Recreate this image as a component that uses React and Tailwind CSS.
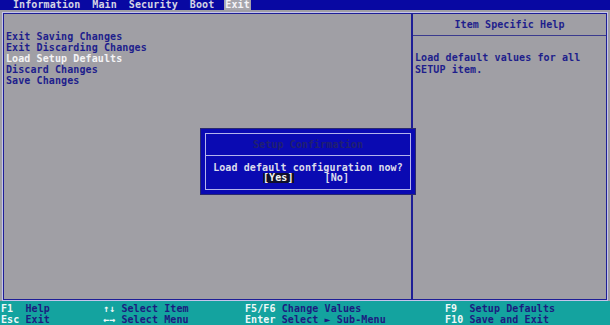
import React from "react";

const mono = { fontFamily: '"DejaVu Sans Mono", "Liberation Mono", monospace' };

export default function App() {
  const items = [
    { t: "Exit Saving Changes", sel: false },
    { t: "Exit Discarding Changes", sel: false },
    { t: "Load Setup Defaults", sel: true },
    { t: "Discard Changes", sel: false },
    { t: "Save Changes", sel: false },
  ];
  return (
    <div
      className="relative w-[610px] h-[325px] flex flex-col bg-[#a09fa5] overflow-hidden font-bold text-[10px] tracking-[0.1px] whitespace-pre"
      style={mono}
    >
      {/* top menu bar */}
      <div className="h-[10px] bg-[#0808a2] flex items-center pl-[13px] leading-[10px] text-[#d4d4e4]">
        <span>Information</span>
        <span className="ml-[12px]">Main</span>
        <span className="ml-[12px]">Security</span>
        <span className="ml-[12px]">Boot</span>
        <span className="ml-[10px] px-[1px] bg-[#a6a5ac] text-[#f4f4f8]">Exit</span>
      </div>

      {/* main area */}
      <div className="flex-1 pt-[3px] px-[3px] pb-[1px] flex">
        <div className="flex-1 flex border border-[#1e1e96] shadow-[0_0_0_1px_#c4c4ec]">
          {/* left */}
          <div className="w-[409px] border-r-2 border-[#1e1e96] pt-[17px] pl-[2px] flex flex-col leading-[11px]">
            {items.map((it) => (
              <div key={it.t} className={it.sel ? "text-[#f4f4f6]" : "text-[#1e1e8c]"}>
                {it.t}
              </div>
            ))}
          </div>
          {/* right */}
          <div className="flex-1 flex flex-col">
            <div className="h-[22px] border-b border-[#3a3a8e] flex items-center justify-center text-[#1e1e8c] leading-[10px] pt-[1px]">
              Item Specific Help
            </div>
            <div className="pt-[16px] pl-[2px] text-[#1e1e8c] leading-[12px]">
              <div>Load default values for all</div>
              <div>SETUP item.</div>
            </div>
          </div>
        </div>
      </div>

      {/* bottom bar */}
      <div className="h-[24px] bg-[#14a39f] flex flex-col justify-center pl-[1px] pt-[2px] leading-[11px]">
        <div className="flex">
          <div className="w-[102px]"><span className="text-[#eef8f8]">F1  </span><span className="text-[#1c1c80]">Help</span></div>
          <div className="w-[142px]"><span className="text-[#eef8f8]">↑↓ </span><span className="text-[#1c1c80]">Select Item</span></div>
          <div className="w-[200px]"><span className="text-[#eef8f8]">F5/F6 </span><span className="text-[#1c1c80]">Change Values</span></div>
          <div><span className="text-[#eef8f8]">F9  </span><span className="text-[#1c1c80]">Setup Defaults</span></div>
        </div>
        <div className="flex">
          <div className="w-[102px]"><span className="text-[#eef8f8]">Esc </span><span className="text-[#1c1c80]">Exit</span></div>
          <div className="w-[142px]"><span className="text-[#eef8f8]">←→ </span><span className="text-[#1c1c80]">Select Menu</span></div>
          <div className="w-[200px]"><span className="text-[#eef8f8]">Enter </span><span className="text-[#1c1c80]">Select ► Sub-Menu</span></div>
          <div><span className="text-[#eef8f8]">F10 </span><span className="text-[#1c1c80]">Save and Exit</span></div>
        </div>
      </div>

      {/* dialog */}
      <div className="absolute left-[201px] top-[129px] w-[214px] h-[65px] bg-[#0a0ab2] p-[4px] shadow-[0_0_0_1px_#2a2a70]">
        <div className="h-full border border-[#b4b4ec] flex flex-col">
          <div className="h-[22px] border-b border-[#b4b4ec] flex items-center justify-center text-[#202070] leading-[10px]">
            Setup Confirmation
          </div>
          <div className="pt-[7px] text-center text-[#dcdcec] leading-[10px]">
            Load default configuration now?
          </div>
          <div className="flex leading-[10px] text-[#dcdcec] pl-[57px]">
            <span className="bg-[#10102a] text-[#f4f4f4]">[Yes]</span>
            <span className="ml-[31px]">[No]</span>
          </div>
        </div>
      </div>
    </div>
  );
}
